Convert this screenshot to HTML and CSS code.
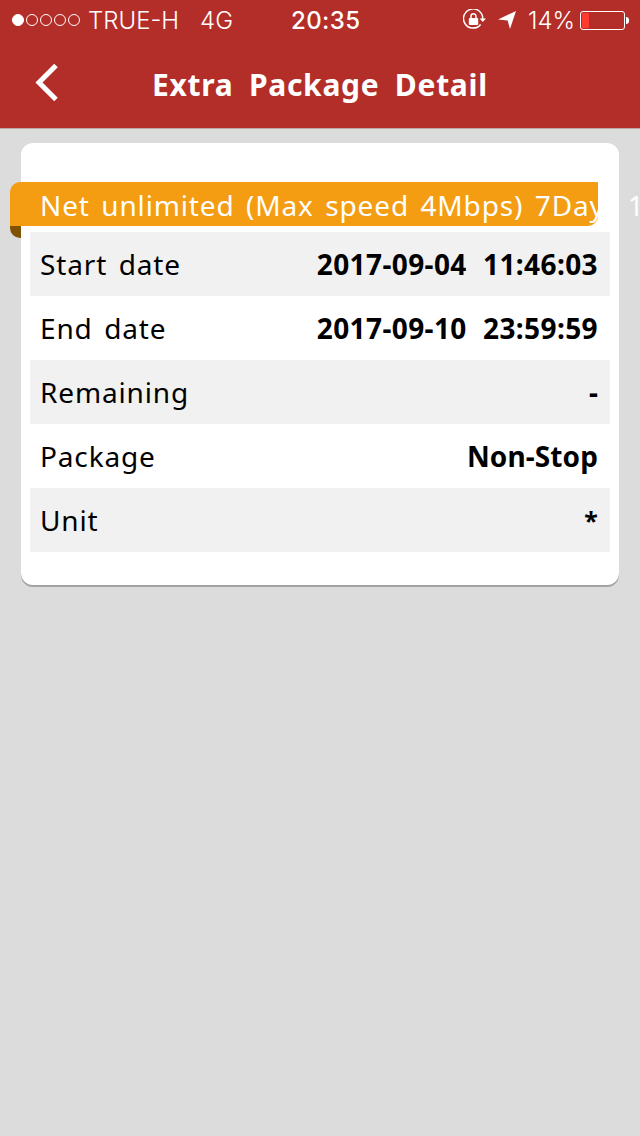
FILE: index.html
```html
<!DOCTYPE html>
<html lang="en">
<head>
<meta charset="utf-8">
<title>Extra Package Detail</title>
<link rel="stylesheet" href="styles.css">
</head>
<body>
<header class="header">
  <div class="status">
    <div class="status-left">
      <span class="dots"><i class="dot on"></i><i class="dot"></i><i class="dot"></i><i class="dot"></i><i class="dot"></i></span>
      <span class="carrier">TRUE-H</span>
      <span class="net">4G</span>
    </div>
    <div class="clock">20:35</div>
    <div class="status-right">
      <svg class="ic-lock" width="24" height="22" viewBox="0 0 24 22"><path d="M17.6 15.5A9.600 9.600 0 1 1 19.700 10" fill="none" stroke="#fff" stroke-width="1.500"/><path d="M16.600 9.400h6.400l-3.200 3.600z" fill="#fff"/><rect x="5.800" y="9" width="9.400" height="7" rx="1" fill="#fff"/><path d="M8 9V7.200a2.500 2.500 0 0 1 5 0V9" fill="none" stroke="#fff" stroke-width="1.500"/></svg>
      <svg class="ic-loc" width="18" height="18" viewBox="0 0 18 18"><path d="M0 8.500 18 0l-6 18-2.400-8.600z" fill="#fff"/></svg>
      <span class="pct">14%</span>
      <span class="battery"><span class="level"></span></span><span class="nub"></span>
    </div>
  </div>
  <div class="nav">
    <svg class="back" width="26" height="40" viewBox="0 0 26 40"><path d="M23 3.500 6 20.500l17 17" fill="none" stroke="#fff" stroke-width="5"/></svg>
    <h1 class="title">Extra Package Detail</h1>
  </div>
</header>
<main class="page">
  <section class="card">
    <div class="ribbon">
      <span class="ribbon-text">Net unlimited (Max speed 4Mbps) 7Day&nbsp;&nbsp;1</span>
    </div>
    <div class="rows">
      <div class="row"><span>Start date</span><b class="date">2017-09-04 11:46:03</b></div>
      <div class="row"><span>End date</span><b class="date">2017-09-10 23:59:59</b></div>
      <div class="row"><span>Remaining</span><b>-</b></div>
      <div class="row"><span>Package</span><b>Non-Stop</b></div>
      <div class="row"><span>Unit</span><b class="star">*</b></div>
    </div>
  </section>
</main>
</body>
</html>
```
FILE: styles.css
```css
* { box-sizing: border-box; }
html, body { margin: 0; padding: 0; }
body {
  width: 640px;
  height: 1136px;
  overflow: hidden;
  background: #dcdcdc;
  font-family: "Noto Sans", "Open Sans", sans-serif;
  color: #000;
  letter-spacing: .85px;
  word-spacing: 3.4px;
}
.header {
  height: 129px;
  background: #b32e28;
  color: #fff;
  border-bottom: 1px solid #b9a5a4;
}
.status {
  height: 40px;
  display: grid;
  grid-template-columns: 279px auto 1fr;
  align-items: center;
  padding: 0 11px 0 12px;
  font-family: Inter, "Liberation Sans", sans-serif;
  font-size: 24px;
  font-weight: 300;
  letter-spacing: 0;
  word-spacing: 0;
}
.status-left { display: flex; align-items: center; }
.dots { display: flex; gap: 2px; margin-right: 8px; }
.dot { width: 12px; height: 12px; border: 1px solid #fff; border-radius: 50%; }
.dot.on { background: #fff; }
.net { margin-left: 21px; }
.clock { font-weight: 500; letter-spacing: .4px; }
.status-right { display: flex; align-items: center; justify-content: flex-end; }
.ic-lock { margin-right: 11px; }
.ic-loc { margin-right: 12px; }
.pct { margin-right: 5px; }
.battery {
  width: 45px;
  height: 19px;
  border: 1px solid #fff;
  border-radius: 3px;
  padding: 1px;
  display: flex;
}
.level { width: 7px; background: #ff3b30; border-radius: 1px; }
.nub { width: 3px; height: 7px; background: #fff; border-radius: 0 3px 3px 0; margin-left: 1px; }
.nav {
  height: 88px;
  display: flex;
  align-items: center;
  padding: 0 0 4px 33px;
}
.title {
  margin: 6px 0 0 93px;
  font-size: 30px;
  font-weight: 700;
  line-height: 40px;
  letter-spacing: .7px;
  word-spacing: 7px;
}
.page { padding: 14px 21px 0; }
.card {
  position: relative;
  z-index: 0;
  height: 442px;
  padding-top: 39px;
  background: #fff;
  border-radius: 12px;
  box-shadow: 0 2px 0 #a3a3a3;
}
.ribbon {
  position: relative;
  width: 588px;
  height: 44px;
  margin: 0 0 6px -11px;
  padding-left: 30px;
  background: #f49c12;
  border-radius: 10px 0 10px 0;
  color: #fff;
  font-size: 28px;
  line-height: 47px;
  white-space: nowrap;
}
.ribbon::after {
  content: "";
  position: absolute;
  z-index: -1;
  left: 0;
  top: 34px;
  width: 11px;
  height: 22px;
  background: #7f5205;
  border-radius: 0 0 0 10px;
}
.rows { margin: 0 9px; }
.row {
  height: 64px;
  display: flex;
  align-items: center;
  justify-content: space-between;
  padding: 0 12px 0 10px;
  font-size: 28px;
}
.row:nth-child(odd) { background: #f1f1f1; }
.row b { font-weight: 700; letter-spacing: .1px; }
.row .date { letter-spacing: .4px; word-spacing: 8.500px; }
.row .star { font-size: 25px; }
```
